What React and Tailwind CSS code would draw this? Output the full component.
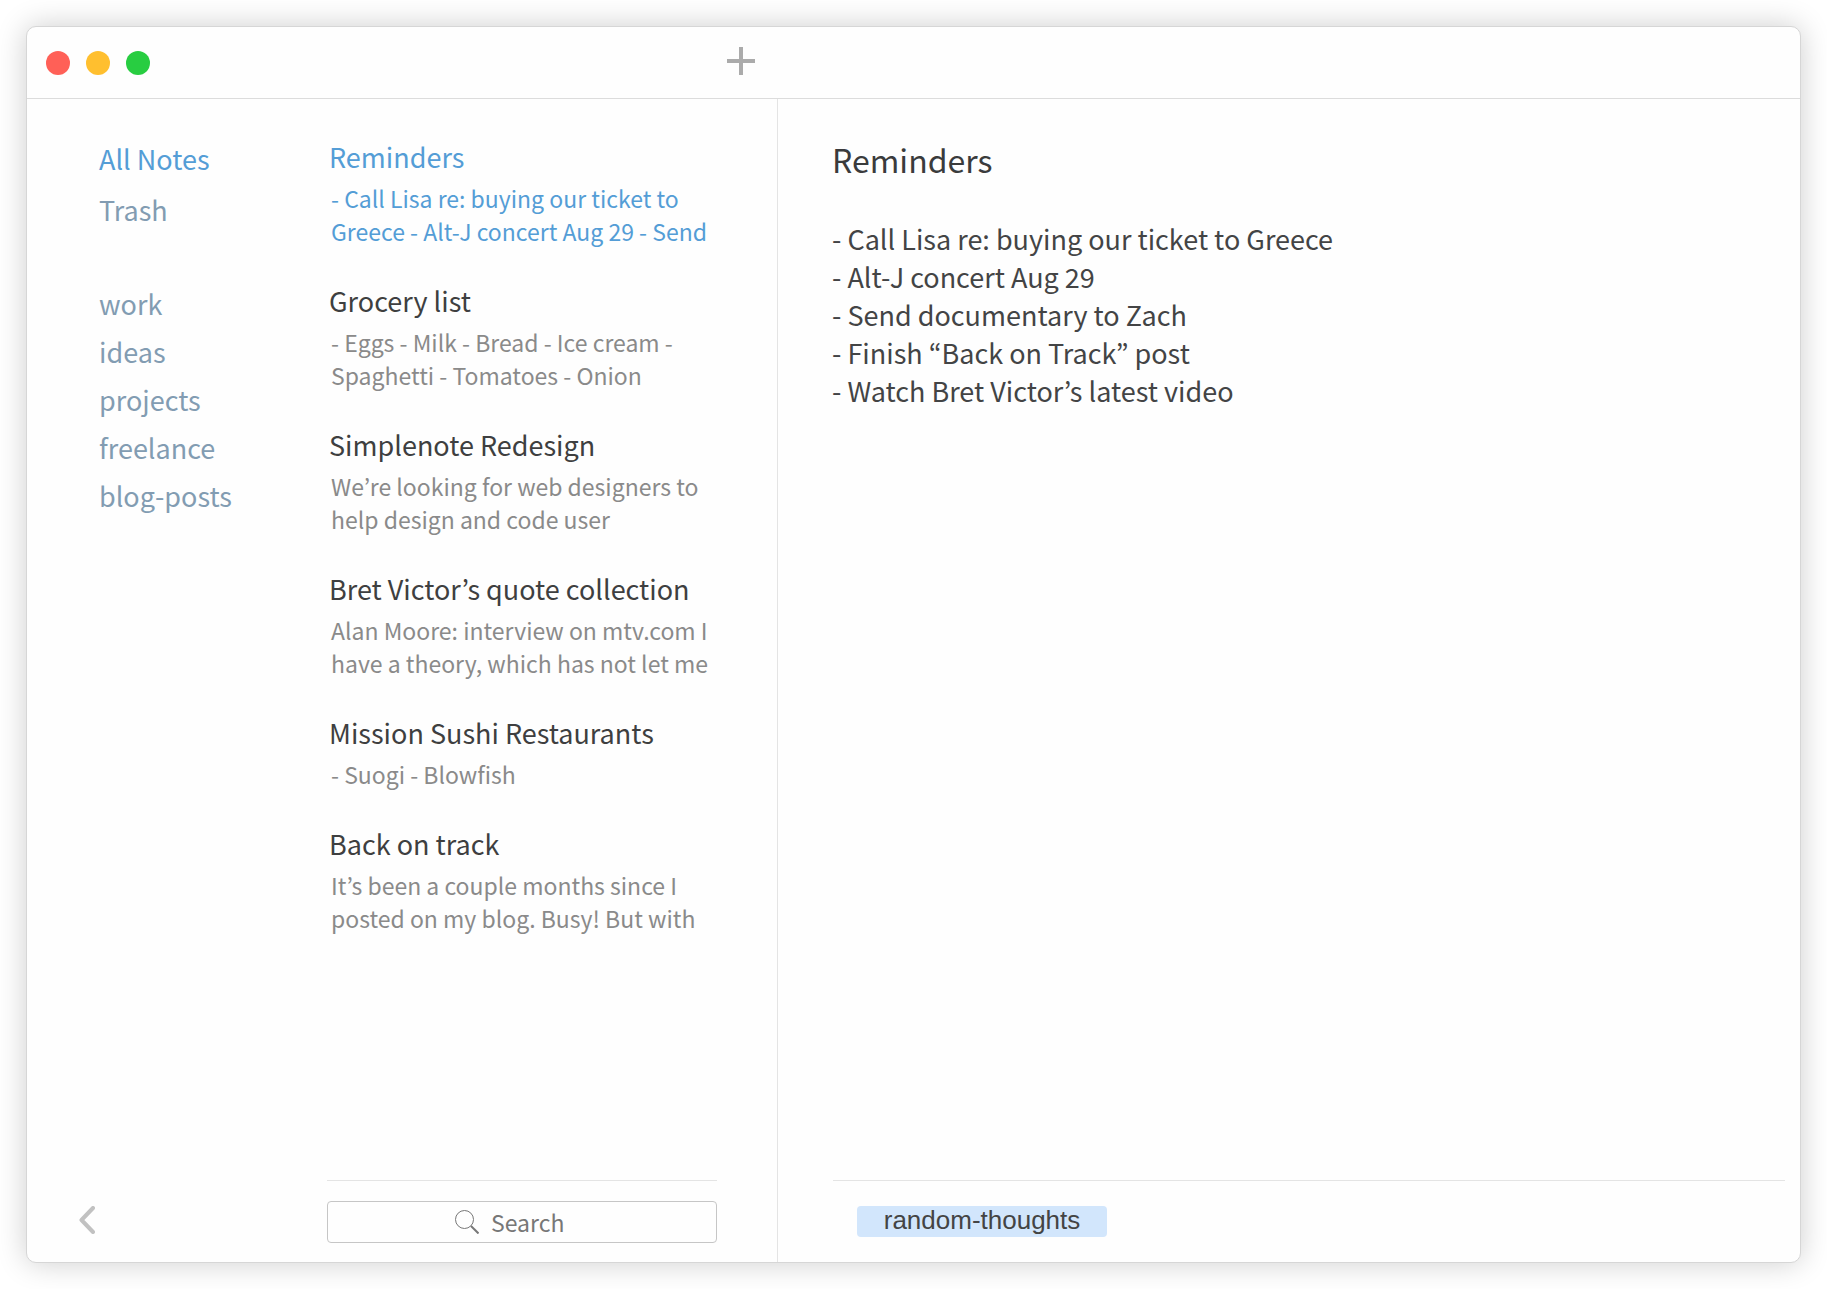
const folders = ["All Notes", "Trash"];
const tags = ["work", "ideas", "projects", "freelance", "blog-posts"];

const notes = [
  { title: "Reminders", preview: ["- Call Lisa re: buying our ticket to", "Greece - Alt-J concert Aug 29 - Send"] },
  { title: "Grocery list", preview: ["- Eggs - Milk - Bread - Ice cream -", "Spaghetti - Tomatoes - Onion"] },
  { title: "Simplenote Redesign", preview: ["We’re looking for web designers to", "help design and code user"] },
  { title: "Bret Victor’s quote collection", preview: ["Alan Moore: interview on mtv.com I", "have a theory, which has not let me"] },
  { title: "Mission Sushi Restaurants", preview: ["- Suogi - Blowfish"] },
  { title: "Back on track", preview: ["It’s been a couple months since I", "posted on my blog. Busy! But with"] },
];

const body = [
  "- Call Lisa re: buying our ticket to Greece",
  "- Alt-J concert Aug 29",
  "- Send documentary to Zach",
  "- Finish “Back on Track” post",
  "- Watch Bret Victor’s latest video",
];

function TitleBar() {
  return (
    <header className="flex h-[72px] shrink-0 items-center border-b border-[#dcdcdc]">
      <div className="flex w-[750px] shrink-0 items-center justify-between pl-[19px] pr-[22px]">
        <div className="flex gap-4">
          <button aria-label="Close" className="size-6 rounded-full bg-[#ff6057]" />
          <button aria-label="Minimize" className="size-6 rounded-full bg-[#ffbf2f]" />
          <button aria-label="Zoom" className="size-6 rounded-full bg-[#28cd41]" />
        </div>
        <button aria-label="New note" className="pb-1">
          <svg width="28" height="28" viewBox="0 0 28 28" fill="#ababab" className="block">
            <path d="M12 0h4v12h12v4H16v12h-4V16H0v-4h12z" />
          </svg>
        </button>
      </div>
    </header>
  );
}

function Sidebar() {
  return (
    <nav className="flex w-[300px] shrink-0 flex-col pl-[72px] pt-9 text-[27px]">
      <ul>
        {folders.map((name, i) => (
          <li key={name} className="h-[51px]">
            <a href="#" className={i === 0 ? "leading-[48px] text-[#549dd6]" : "leading-[48px] text-[#829cb2]"}>
              {name}
            </a>
          </li>
        ))}
      </ul>
      <ul className="mt-[43px]">
        {tags.map((name) => (
          <li key={name} className="h-12">
            <a href="#" className="leading-[48px] text-[#829cb2]">{name}</a>
          </li>
        ))}
      </ul>
      <div className="-ml-5 mt-auto flex h-[84px] items-center">
        <button aria-label="Collapse sidebar">
          <svg width="16" height="28" viewBox="0 0 16 28" fill="none" stroke="#c1c1c1" strokeWidth="4" strokeLinecap="round" strokeLinejoin="round">
            <path d="M14 2L2.500 14L14 26" />
          </svg>
        </button>
      </div>
    </nav>
  );
}

function NoteList() {
  return (
    <section className="flex w-[451px] shrink-0 flex-col border-r border-[#e4e4e4] pr-[60px]">
      <ul className="grow pl-[2px] pt-[34px]">
        {notes.map((note, i) => (
          <li key={note.title} className="pb-[29px]">
            <a href="#" className="block whitespace-nowrap">
              <h2 className={i === 0 ? "pb-px text-[27px] leading-[48px] text-[#549dd6]" : "pb-px text-[27px] leading-[48px] text-[#3e3f40]"}>
                {note.title}
              </h2>
              <p className={i === 0 ? "pl-[2px] text-[23px] leading-[33px] text-[#549dd6]" : "pl-[2px] text-[23px] leading-[33px] text-[#8a8a8a]"}>
                {note.preview.map((line) => (
                  <span key={line} className="block">{line}</span>
                ))}
              </p>
            </a>
          </li>
        ))}
      </ul>
      <div className="h-[82px] border-t border-[#e4e4e4] pt-5">
        <label className="flex h-[42px] items-center justify-center gap-3 rounded border border-[#c6c6c6]">
          <svg width="24" height="24" viewBox="0 0 24 24" fill="none" stroke="#777777">
            <circle cx="9.500" cy="9.500" r="9" strokeWidth="1" />
            <path d="M16 16L23.500 23.500" strokeWidth="2" />
          </svg>
          <input
            type="text"
            aria-label="Search"
            placeholder="Search"
            className="w-[98px] bg-transparent text-[23px] leading-[38px] outline-none placeholder:text-[#777777]"
          />
        </label>
      </div>
    </section>
  );
}

function Editor() {
  return (
    <main className="flex min-w-0 grow flex-col pl-[54px]">
      <div className="grow pt-9">
        <h1 className="text-[32px] leading-[48px] text-[#3a3b3c]">Reminders</h1>
        <div className="mt-[37px] text-[27px] leading-[38px] text-[#434445]">
          {body.map((line) => (
            <p key={line}>{line}</p>
          ))}
        </div>
      </div>
      <div className="ml-px mr-[15px] flex h-[82px] items-center border-t border-[#e4e4e4] pl-6">
        <button className="h-[31px] w-[250px] rounded bg-[#d2e6fc] pb-[2px] font-['Liberation_Sans',sans-serif] text-[26px] leading-[29px] text-[#444444]">
          random-thoughts
        </button>
      </div>
    </main>
  );
}

export default function App() {
  return (
    <div className="flex min-h-screen bg-white p-[26px] font-['Noto_Sans_CJK_KR','Noto_Sans',sans-serif]">
      <div className="flex grow flex-col rounded-[10px] border border-[#d6d6d6] bg-[#fefefe] shadow-[0_0_30px_rgba(0,0,0,0.2)]">
        <TitleBar />
        <div className="flex grow">
          <Sidebar />
          <NoteList />
          <Editor />
        </div>
      </div>
    </div>
  );
}
